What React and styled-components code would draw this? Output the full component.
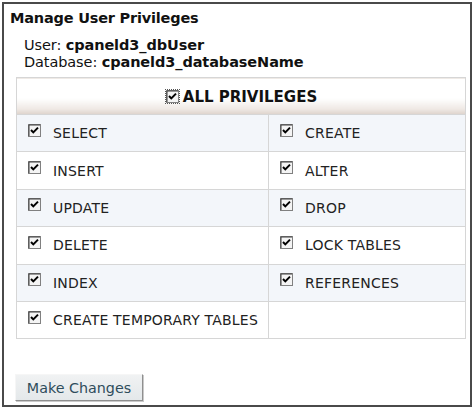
import React from "react";
import styled, { createGlobalStyle } from "styled-components";

const GlobalStyle = createGlobalStyle`
  body {
    margin: 0;
    background: #ffffff;
    font-family: "DejaVu Sans", Verdana, sans-serif;
    color: #111;
  }
`;

const Frame = styled.div`
  box-sizing: border-box;
  margin: 2px 0 0 2px;
  width: 470px;
  height: 405px;
  border: 2px solid #4a4a4a;
  background: #fff;
  padding: 5px 4px 0 6px;
  display: flex;
  flex-direction: column;
`;

const Title = styled.h1`
  margin: 0;
  font-size: 14.5px;
  font-weight: bold;
  line-height: 18px;
  letter-spacing: -0.2px;
`;

const Info = styled.div`
  margin: 10px 0 0 14px;
  font-size: 14.5px;
  line-height: 17px;
  letter-spacing: -0.1px;
`;

const Value = styled.strong`
  font-weight: bold;
`;

const Table = styled.table`
  margin: 6px 0 0 6px;
  width: 450px;
  border-collapse: collapse;
  table-layout: fixed;
`;

const HeadCell = styled.th`
  height: 36px;
  padding: 0;
  border: 1px solid #d6d6d6;
  background: linear-gradient(to bottom, #ffffff 0%, #ffffff 55%, #efe9e4 85%, #ddd3cb 100%);
  font-size: 15px;
  font-weight: bold;
  text-align: center;
`;

const HeadLabel = styled.span`
  display: inline-flex;
  align-items: center;
  gap: 3px;
  padding-top: 3px;
`;

const FocusRing = styled.span`
  display: inline-flex;
  padding: 1px;
  outline: 1px dotted #555;
  outline-offset: -1px;
`;

const Row = styled.tr`
  background: ${({ $shaded }) => ($shaded ? "#f3f6fa" : "#ffffff")};
`;

const Cell = styled.td`
  height: 36.4px;
  padding: 0 0 0 11px;
  border: 1px solid #d6d6d6;
  vertical-align: middle;
`;

const Option = styled.label`
  display: flex;
  align-items: center;
  gap: 12px;
  font-size: 14px;
  letter-spacing: 0.2px;
  color: #222;
`;

const BoxWrap = styled.span`
  display: inline-flex;
  margin-top: -6px;
`;

const Footer = styled.div`
  margin-top: auto;
  padding: 0 0 4px 5px;
`;

const Button = styled.button`
  width: 128px;
  height: 27px;
  padding: 0;
  font-family: "DejaVu Sans", Verdana, sans-serif;
  font-size: 14.3px;
  color: #2f4d5c;
  background: linear-gradient(to bottom, #f0f2f3, #e4e8ea);
  border: 1px solid;
  border-color: #f6f6f6 #8f8f8f #8f8f8f #f6f6f6;
  box-shadow: 1px 1px 0 #c9c9c9;
`;

const CheckBox = () => (
  <svg width="13" height="13" viewBox="0 0 13 13">
    <rect x="0.5" y="0.5" width="12" height="12" fill="#f4f4f4" stroke="#808080" />
    <path d="M1 12V1h11" fill="none" stroke="#3c3c3c" strokeWidth="1" />
    <path d="M3 6l2.3 2.4L10 3.6" fill="none" stroke="#000" strokeWidth="2" />
  </svg>
);

const rows = [
  ["SELECT", "CREATE"],
  ["INSERT", "ALTER"],
  ["UPDATE", "DROP"],
  ["DELETE", "LOCK TABLES"],
  ["INDEX", "REFERENCES"],
  ["CREATE TEMPORARY TABLES", null],
];

const Privilege = ({ name }) => (
  <Option>
    <BoxWrap>
      <CheckBox />
    </BoxWrap>
    {name}
  </Option>
);

const App = () => (
  <>
    <GlobalStyle />
    <Frame>
      <Title>Manage User Privileges</Title>
      <Info>
        <div>
          User: <Value>cpaneld3_dbUser</Value>
        </div>
        <div>
          Database: <Value>cpaneld3_databaseName</Value>
        </div>
      </Info>
      <Table>
        <colgroup>
          <col style={{ width: 252 }} />
          <col />
        </colgroup>
        <thead>
          <tr>
            <HeadCell colSpan={2}>
              <HeadLabel>
                <FocusRing>
                  <CheckBox />
                </FocusRing>
                ALL PRIVILEGES
              </HeadLabel>
            </HeadCell>
          </tr>
        </thead>
        <tbody>
          {rows.map(([left, right], i) => (
            <Row key={left} $shaded={i % 2 === 0}>
              <Cell>
                <Privilege name={left} />
              </Cell>
              <Cell>{right && <Privilege name={right} />}</Cell>
            </Row>
          ))}
        </tbody>
      </Table>
      <Footer>
        <Button>Make Changes</Button>
      </Footer>
    </Frame>
  </>
);

export default App;
